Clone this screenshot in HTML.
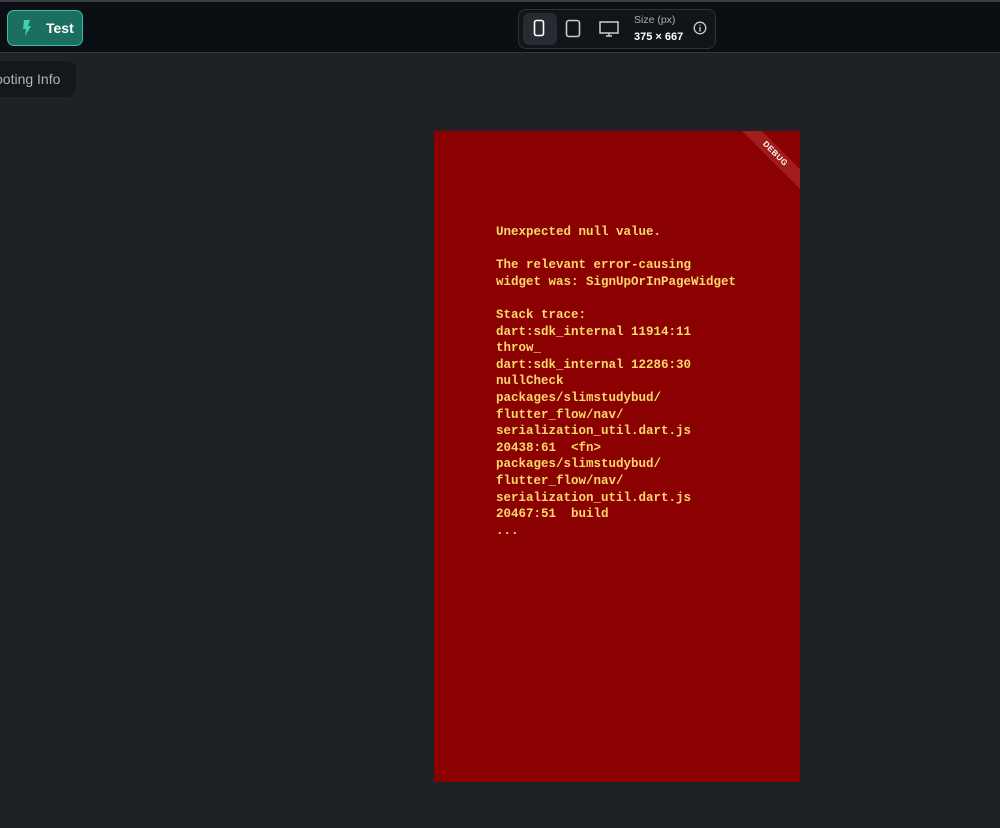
<!DOCTYPE html>
<html><head><style>
body{margin:0;width:1000px;height:828px;background:#1e2226;position:relative;overflow:hidden;font-family:"Liberation Sans",sans-serif}
.top{position:absolute;left:0;top:0;width:1000px;height:2px;background:#3a3e44}
.hdr{position:absolute;left:0;top:2px;width:1000px;height:50px;background:#0b0e12;border-bottom:1px solid #33383e}
.test{position:absolute;left:7px;top:8px;width:76px;height:36px;border:1.5px solid #3bbfa6;border-radius:7px;background:#1b6f61;box-sizing:border-box}
.test span{position:absolute;left:38px;top:9px;color:#fff;font-weight:bold;font-size:14px}
.dev{position:absolute;left:518px;top:7px;width:196px;height:38px;border:1px solid #2e3338;border-radius:8px;background:#111418}
.sel{position:absolute;left:4px;top:3px;width:34px;height:32px;background:#262b31;border-radius:6px}
.info{position:absolute;left:0;top:61px;width:76px;height:36px;background:#15181b;border-radius:0 8px 8px 0;color:#aeb3b8;font-size:14px;line-height:36px;text-indent:-5px}
.phone{position:absolute;left:434px;top:131px;width:366px;height:651px;background:#8b0000;overflow:hidden}
.rib{position:absolute;left:286px;top:16px;width:110px;height:14px;background:#a11d1d;transform:rotate(45deg);color:#fff;font-size:8px;font-weight:bold;text-align:center;line-height:14px;letter-spacing:.5px}
pre{position:absolute;left:62px;top:93px;margin:0;font-family:"Liberation Mono",monospace;font-weight:bold;font-size:12.5px;line-height:16.6px;color:#fcd96a}
</style></head><body>
<div class="top"></div>
<div class="hdr">
<div class="test"><svg style="position:absolute;left:14px;top:9px" width="10" height="16" viewBox="0 0 10 16"><path d="M2 0H8L6 6H9L3 16L4 9H1Z" fill="#3fd1b4"/></svg><span>Test</span></div>
<div class="dev"><div class="sel"></div>
<svg style="position:absolute;left:14px;top:9px" width="12" height="18"><rect x="1.5" y="1.5" width="9" height="15" rx="2" fill="none" stroke="#fff" stroke-width="1.6"/></svg>
<svg style="position:absolute;left:46px;top:9px" width="16" height="19"><rect x="1.5" y="1.5" width="13" height="16" rx="2.5" fill="none" stroke="#c9ccd0" stroke-width="1.6"/></svg>
<svg style="position:absolute;left:80px;top:11px" width="20" height="16"><rect x="1" y="1" width="18" height="11" fill="none" stroke="#c9ccd0" stroke-width="1.5"/><path d="M7 15H13M10 12V15" stroke="#c9ccd0" stroke-width="1.5"/></svg>
<div style="position:absolute;left:115px;top:4px;color:#a9adb2;font-size:10.5px">Size (px)</div>
<div style="position:absolute;left:115px;top:21px;color:#fff;font-size:11px;font-weight:bold">375 × 667</div>
<svg style="position:absolute;left:174px;top:11px" width="14" height="14"><circle cx="7" cy="7" r="5.8" fill="none" stroke="#c9ccd0" stroke-width="1.3"/><path d="M7 6V10.5M7 3.8V4.8" stroke="#c9ccd0" stroke-width="1.4"/></svg>
</div>
</div>
<div class="info">ooting Info</div>
<div class="phone"><div class="rib">DEBUG</div>
<pre>Unexpected null value.

The relevant error-causing
widget was: SignUpOrInPageWidget

Stack trace:
dart:sdk_internal 11914:11
throw_
dart:sdk_internal 12286:30
nullCheck
packages/slimstudybud/
flutter_flow/nav/
serialization_util.dart.js
20438:61  &lt;fn&gt;
packages/slimstudybud/
flutter_flow/nav/
serialization_util.dart.js
20467:51  build
...</pre></div>
</body></html>
